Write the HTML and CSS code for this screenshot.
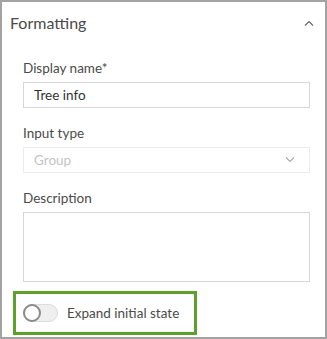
FILE: index.html
```html
<!DOCTYPE html>
<html lang="en">

<head>
    <meta charset="UTF-8">
    <meta name="viewport" content="width=device-width, initial-scale=1.0">
    <title>Formatting</title>
    <link rel="stylesheet" href="styles.css">
</head>

<body>
    <div class="panel">
        <div class="header">
            <span class="title">Formatting</span>
            <svg class="chevron" width="10" height="6" viewBox="0 0 10 6">
                <path d="M1 5.5 L5 1.5 L9 5.5" fill="none" stroke="#666" stroke-width="1.2" />
            </svg>
        </div>
        <div class="content">
            <div class="field">
                <label class="label">Display name*</label>
                <div class="input">Tree info</div>
            </div>
            <div class="field">
                <label class="label">Input type</label>
                <div class="input select disabled">
                    <span>Group</span>
                    <svg width="10" height="6" viewBox="0 0 10 6">
                        <path d="M1 0.5 L5 4.5 L9 0.5" fill="none" stroke="#aaa" stroke-width="1.2" />
                    </svg>
                </div>
            </div>
            <div class="field">
                <label class="label">Description</label>
                <div class="input textarea"></div>
            </div>
            <div class="toggle-row">
                <span class="switch"><span class="knob"></span></span>
                <span class="toggle-label">Expand initial state</span>
            </div>
        </div>
    </div>
</body>

</html>
```

FILE: styles.css
```css
* {
    margin: 0;
    padding: 0;
    box-sizing: border-box;
    font-family: 'Lato', 'Noto Sans', sans-serif;
}

body {
    background: #ffffff;
    color: #4a4a4a;
}

.panel {
    width: 327px;
    height: 339px;
    border: 2px solid #a3a3a3;
    background: #fff;
}

.header {
    display: flex;
    justify-content: space-between;
    align-items: center;
    height: 44px;
    padding: 0 11px 4px 8px;
}

.title {
    font-size: 16px;
    color: #4a4a4a;
}

.chevron {
    margin-top: 2px;
}

.content {
    padding: 13px 15px 0 21px;
    display: flex;
    flex-direction: column;
}

.field {
    display: flex;
    flex-direction: column;
    margin-bottom: 16px;
}

.field:nth-child(3) {
    margin-bottom: 9px;
}

.label {
    font-size: 13.5px;
    line-height: 18px;
    margin-bottom: 5px;
    color: #4a4a4a;
}

.input {
    height: 26px;
    border: 1px solid #d6d6d6;
    font-size: 13.5px;
    line-height: 24px;
    padding: 0 10px;
    color: #333;
}

.select {
    display: flex;
    justify-content: space-between;
    align-items: center;
    padding-right: 14px;
}

.disabled {
    border-color: #ececec;
    color: #c4c4c4;
}

.textarea {
    height: 70px;
}

.toggle-row {
    display: flex;
    align-items: center;
    gap: 9px;
    width: 184px;
    height: 44px;
    margin-left: -10px;
    padding-left: 7px;
    border: 3px solid #5fa02a;
}

.switch {
    position: relative;
    width: 35px;
    height: 18px;
    border-radius: 9px;
    background: #efefef;
    border: 1px solid #dcdcdc;
}

.knob {
    position: absolute;
    left: -1px;
    top: -1px;
    width: 18px;
    height: 18px;
    border-radius: 50%;
    background: #fff;
    border: 2px solid #8a8a8a;
}

.toggle-label {
    font-size: 13.5px;
    color: #4a4a4a;
}
```
